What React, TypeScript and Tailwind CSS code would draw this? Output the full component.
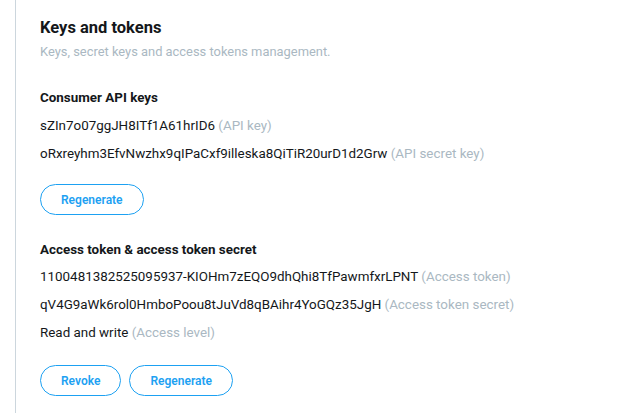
import React from "react";

const consumerKeys = [
  { value: "sZIn7o07ggJH8ITf1A61hrID6", label: "API key" },
  { value: "oRxreyhm3EfvNwzhx9qIPaCxf9illeska8QiTiR20urD1d2Grw", label: "API secret key" },
];

const accessTokens = [
  { value: "1100481382525095937-KIOHm7zEQO9dhQhi8TfPawmfxrLPNT", label: "Access token" },
  { value: "qV4G9aWk6rol0HmboPoou8tJuVd8qBAihr4YoGQz35JgH", label: "Access token secret" },
  { value: "Read and write", label: "Access level" },
];

function KeyRow({ value, label }: { value: string; label: string }) {
  return (
    <p className="h-7 leading-7 text-[13.4px] text-[#14171a]">
      {value} <span className="text-[#aab8c2]">({label})</span>
    </p>
  );
}

function PillButton({ children }: { children: React.ReactNode }) {
  return (
    <button
      type="button"
      className="h-[31px] px-[20px] rounded-full border border-[#1da1f2] text-[#1da1f2] text-[12px] font-semibold bg-white"
    >
      {children}
    </button>
  );
}

export default function App() {
  return (
    <div
      className="w-[634px] h-[413px] bg-white overflow-hidden pl-[15px]"
      style={{ fontFamily: 'Roboto, "Noto Sans", sans-serif' }}
    >
      <div className="h-full border-l border-[#ccd6dd] pl-[24px] pt-[16px]">
        <h2 className="text-[16.5px] font-bold text-[#14171a] leading-6">Keys and tokens</h2>
        <p className="text-[12.9px] text-[#aab8c2] leading-5 mt-[2px]">
          Keys, secret keys and access tokens management.
        </p>

        <h3 className="text-[13.4px] font-bold text-[#14171a] mt-[24px] leading-6">Consumer API keys</h3>
        <div className="mt-[2px]">
          {consumerKeys.map((k) => (
            <KeyRow key={k.label} {...k} />
          ))}
        </div>
        <div className="mt-[16px] flex gap-2">
          <PillButton>Regenerate</PillButton>
        </div>

        <h3 className="text-[13.4px] font-bold text-[#14171a] mt-[23px] leading-6">
          Access token &amp; access token secret
        </h3>
        <div className="mt-[1px]">
          {accessTokens.map((k) => (
            <KeyRow key={k.label} {...k} />
          ))}
        </div>
        <div className="mt-[18px] flex gap-2">
          <PillButton>Revoke</PillButton>
          <PillButton>Regenerate</PillButton>
        </div>
      </div>
    </div>
  );
}
